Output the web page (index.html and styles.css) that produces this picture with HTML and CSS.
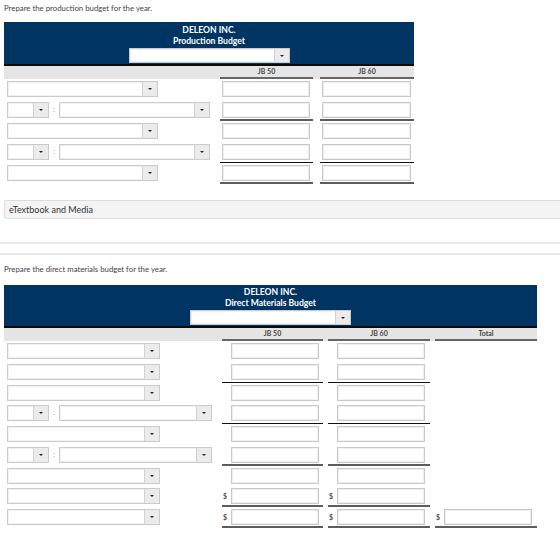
FILE: index.html
```html
<!DOCTYPE html>
<html lang="en">
<head>
    <meta charset="UTF-8">
    <meta name="viewport" content="width=device-width, initial-scale=1.0">
    <title>Budgets</title>
    <link rel="stylesheet" href="styles.css">
</head>
<body>
    <p class="prompt">Prepare the production budget for the year.</p>

    <div class="budget">
        <div class="head">
            <div>DELEON INC.</div>
            <div>Production Budget</div>
            <div class="pick pick-head"><span class="pick-btn"></span></div>
        </div>
        <div class="cols">
            <span class="blank"></span>
            <span>JB 50</span>
            <span>JB 60</span>
        </div>

        <div class="row">
            <div class="lbl"><div class="pick pick-md"><span class="pick-btn"></span></div></div>
            <div class="cell"><input class="amt" type="text"></div>
            <div class="cell"><input class="amt amt-r" type="text"></div>
        </div>
        <div class="row">
            <div class="lbl">
                <div class="pick pick-sm"><span class="pick-btn"></span></div>
                <span class="colon">:</span>
                <div class="pick pick-lg"><span class="pick-btn"></span></div>
            </div>
            <div class="cell ln-thick"><input class="amt" type="text"></div>
            <div class="cell ln-thick"><input class="amt amt-r" type="text"></div>
        </div>
        <div class="row">
            <div class="lbl"><div class="pick pick-md"><span class="pick-btn"></span></div></div>
            <div class="cell"><input class="amt" type="text"></div>
            <div class="cell"><input class="amt amt-r" type="text"></div>
        </div>
        <div class="row">
            <div class="lbl">
                <div class="pick pick-sm"><span class="pick-btn"></span></div>
                <span class="colon">:</span>
                <div class="pick pick-lg"><span class="pick-btn"></span></div>
            </div>
            <div class="cell ln-thin"><input class="amt" type="text"></div>
            <div class="cell ln-thin"><input class="amt amt-r" type="text"></div>
        </div>
        <div class="row">
            <div class="lbl"><div class="pick pick-md"><span class="pick-btn"></span></div></div>
            <div class="cell ln-thick"><input class="amt" type="text"></div>
            <div class="cell ln-thick"><input class="amt amt-r" type="text"></div>
        </div>
    </div>

    <div class="media">eTextbook and Media</div>

    <div class="rule"></div>

    <p class="prompt prompt-2">Prepare the direct materials budget for the year.</p>

    <div class="budget budget-wide">
        <div class="head head-tight">
            <div>DELEON INC.</div>
            <div>Direct Materials Budget</div>
            <div class="pick pick-head"><span class="pick-btn"></span></div>
        </div>
        <div class="cols">
            <span class="blank"></span>
            <span>JB 50</span>
            <span>JB 60</span>
            <span>Total</span>
        </div>

        <div class="row">
            <div class="lbl"><div class="pick pick-md"><span class="pick-btn"></span></div></div>
            <div class="cell"><span class="sign"></span><input class="amt" type="text"></div>
            <div class="cell"><span class="sign"></span><input class="amt" type="text"></div>
            <div class="cell"></div>
        </div>
        <div class="row">
            <div class="lbl"><div class="pick pick-md"><span class="pick-btn"></span></div></div>
            <div class="cell ln-thin"><span class="sign"></span><input class="amt" type="text"></div>
            <div class="cell ln-thin"><span class="sign"></span><input class="amt" type="text"></div>
            <div class="cell"></div>
        </div>
        <div class="row">
            <div class="lbl"><div class="pick pick-md"><span class="pick-btn"></span></div></div>
            <div class="cell"><span class="sign"></span><input class="amt" type="text"></div>
            <div class="cell"><span class="sign"></span><input class="amt" type="text"></div>
            <div class="cell"></div>
        </div>
        <div class="row">
            <div class="lbl">
                <div class="pick pick-sm"><span class="pick-btn"></span></div>
                <span class="colon">:</span>
                <div class="pick pick-lg"><span class="pick-btn"></span></div>
            </div>
            <div class="cell ln-thin"><span class="sign"></span><input class="amt" type="text"></div>
            <div class="cell ln-thin"><span class="sign"></span><input class="amt" type="text"></div>
            <div class="cell"></div>
        </div>
        <div class="row">
            <div class="lbl"><div class="pick pick-md"><span class="pick-btn"></span></div></div>
            <div class="cell"><span class="sign"></span><input class="amt" type="text"></div>
            <div class="cell"><span class="sign"></span><input class="amt" type="text"></div>
            <div class="cell"></div>
        </div>
        <div class="row">
            <div class="lbl">
                <div class="pick pick-sm"><span class="pick-btn"></span></div>
                <span class="colon">:</span>
                <div class="pick pick-lg"><span class="pick-btn"></span></div>
            </div>
            <div class="cell ln-thick"><span class="sign"></span><input class="amt" type="text"></div>
            <div class="cell ln-thick"><span class="sign"></span><input class="amt" type="text"></div>
            <div class="cell"></div>
        </div>
        <div class="row">
            <div class="lbl"><div class="pick pick-md"><span class="pick-btn"></span></div></div>
            <div class="cell"><span class="sign"></span><input class="amt" type="text"></div>
            <div class="cell"><span class="sign"></span><input class="amt" type="text"></div>
            <div class="cell"></div>
        </div>
        <div class="row">
            <div class="lbl"><div class="pick pick-md"><span class="pick-btn"></span></div></div>
            <div class="cell ln-thick"><span class="sign">$</span><input class="amt" type="text"></div>
            <div class="cell ln-thick"><span class="sign">$</span><input class="amt" type="text"></div>
            <div class="cell"></div>
        </div>
        <div class="row">
            <div class="lbl"><div class="pick pick-md"><span class="pick-btn"></span></div></div>
            <div class="cell ln-thick"><span class="sign">$</span><input class="amt" type="text"></div>
            <div class="cell ln-thick"><span class="sign">$</span><input class="amt" type="text"></div>
            <div class="cell ln-thick"><span class="sign">$</span><input class="amt" type="text"></div>
        </div>
    </div>
</body>
</html>
```

FILE: styles.css
```css
* {
    box-sizing: border-box;
}

body {
    margin: 0;
    padding: 3px 4px 0;
    font-family: Lato, "Liberation Sans", sans-serif;
    color: #444;
    background-color: white;
    overflow: hidden;
}

.prompt {
    margin: 0 0 9px;
    font-size: 7.8px;
    line-height: 10px;
}

.prompt-2 {
    margin-top: 9px;
    margin-bottom: 11px;
}

/* budget tables */
.budget {
    width: 410px;
}

.budget-wide {
    width: 533px;
}

.head {
    background-color: #003463;
    border-bottom: 2px solid #0b0b0b;
    color: white;
    text-align: center;
    font-size: 8.6px;
    font-weight: bold;
    line-height: 11px;
    padding: 3px 0 1px;
}

.head-tight {
    padding-top: 2px;
}

.cols,
.row {
    display: grid;
    grid-template-columns: 209px 93px 94px;
    column-gap: 7px;
}

.budget-wide .cols,
.budget-wide .row {
    grid-template-columns: 213px 101px 102px 102px;
    column-gap: 5px;
}

.cols {
    height: 13px;
    background-color: #e5e5e5;
}

.cols span {
    text-align: center;
    font-size: 7px;
    font-weight: bold;
    line-height: 11px;
    color: #454545;
    border-bottom: 2px solid #666;
}

.cols .blank {
    border-bottom: none;
}

.row {
    height: 21px;
}

.budget-wide .row {
    height: 20.75px;
}

.lbl {
    display: flex;
    align-items: flex-start;
    padding: 2px 0 0 3px;
}

.cell {
    display: flex;
    align-items: flex-start;
    padding-top: 2px;
}

.ln-thin {
    border-bottom: 1px solid #111;
}

.ln-thick {
    border-bottom: 2px solid #5c5c5c;
}

/* dropdowns */
.pick {
    display: flex;
    justify-content: flex-end;
    height: 16px;
    background-color: white;
    border: 1px solid #cbcbcb;
    box-shadow: inset 0 0 0 1px #f1f1f1;
}

.pick-head {
    width: 161px;
    height: 15px;
    margin: 1px auto 0;
}

.pick-md {
    width: 151px;
}

.budget-wide .pick-md {
    width: 153px;
}

.pick-sm {
    width: 42px;
}

.pick-lg {
    width: 151px;
}

.budget-wide .pick-lg {
    width: 153px;
}

.pick-btn {
    display: flex;
    align-items: center;
    justify-content: center;
    width: 15px;
    height: 100%;
    background-color: #ebebeb;
    border-left: 1px solid #d2d2d2;
}

.pick-btn::before {
    content: "";
    border-left: 2px solid transparent;
    border-right: 2px solid transparent;
    border-top: 2px solid #222;
}

.colon {
    width: 10px;
    text-align: center;
    font-size: 8px;
    line-height: 15px;
    color: #9a9a9a;
}

/* amount inputs */
.amt {
    display: block;
    width: 88px;
    height: 16px;
    margin: 0 0 0 2px;
    padding: 0;
    border: 1px solid #c9c9c9;
    box-shadow: inset 0 0 0 1px #efefef;
    background-color: white;
    font: inherit;
}

.amt-r {
    width: 89px;
}

.budget-wide .amt {
    margin-left: 0;
}

.sign {
    width: 9px;
    padding-left: 1px;
    font-size: 7px;
    font-weight: bold;
    line-height: 16px;
    color: #555;
}

/* resources bar */
.media {
    margin: 16px -12px 0 0;
    height: 19px;
    padding-left: 4px;
    background-color: #f4f4f4;
    border: 1px solid #dcdcdc;
    border-radius: 2px;
    font-size: 9px;
    line-height: 17px;
    color: #333;
}

.rule {
    margin: 23px -4px 0;
    height: 13px;
    border-top: 2px solid #e8e8e8;
    border-bottom: 2px solid #e8e8e8;
}
```
